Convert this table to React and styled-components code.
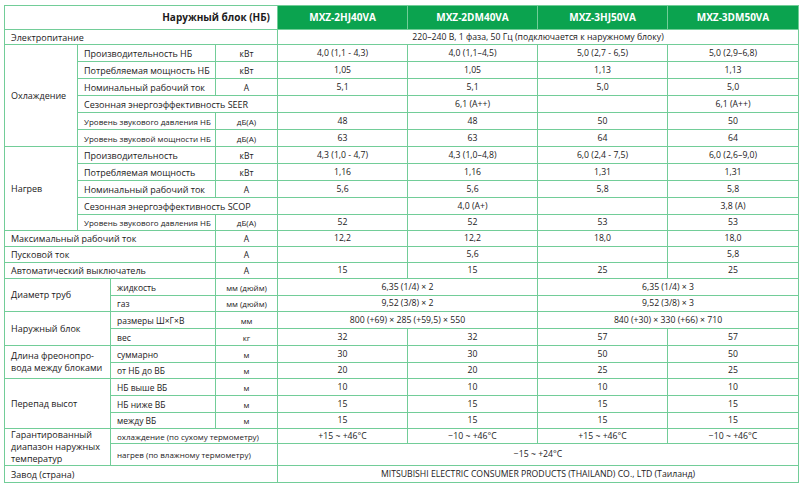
import React from "react";
import styled, { createGlobalStyle, css } from "styled-components";

const models = ["MXZ-2HJ40VA", "MXZ-2DM40VA", "MXZ-3HJ50VA", "MXZ-3DM50VA"];

const cooling = [
  ["Производительность НБ", "кВт", ["4,0 (1,1 - 4,3)", "4,0 (1,1–4,5)", "5,0 (2,7 - 6,5)", "5,0 (2,9–6,8)"]],
  ["Потребляемая мощность НБ", "кВт", ["1,05", "1,05", "1,13", "1,13"]],
  ["Номинальный рабочий ток", "А", ["5,1", "5,1", "5,0", "5,0"]],
  ["Сезонная энергоэффективность SEER", null, ["", "6,1 (A++)", "", "6,1 (A++)"]],
  ["Уровень звукового давления НБ", "дБ(А)", ["48", "48", "50", "50"], true],
  ["Уровень звуковой мощности НБ", "дБ(А)", ["63", "63", "64", "64"], true]
];

const heating = [
  ["Производительность", "кВт", ["4,3 (1,0 - 4,7)", "4,3 (1,0–4,8)", "6,0 (2,4 - 7,5)", "6,0 (2,6–9,0)"]],
  ["Потребляемая мощность", "кВт", ["1,16", "1,16", "1,31", "1,31"]],
  ["Номинальный рабочий ток", "А", ["5,6", "5,6", "5,8", "5,8"]],
  ["Сезонная энергоэффективность SCOP", null, ["", "4,0 (A+)", "", "3,8 (A)"]],
  ["Уровень звукового давления НБ", "дБ(А)", ["52", "52", "53", "53"], true]
];

const general = [
  ["Максимальный рабочий ток", "А", ["12,2", "12,2", "18,0", "18,0"]],
  ["Пусковой ток", "А", ["", "5,6", "", "5,8"]],
  ["Автоматический выключатель", "А", ["15", "15", "25", "25"]]
];

function Values({ list }) {
  return list.map((v, i) => <ValueCell key={i}>{v}</ValueCell>);
}

function GroupRows({ title, rows, heights }) {
  return rows.map(([name, unit, vals, small], i) => (
    <Row key={name + i} $h={heights[i]}>
      {i === 0 && <GroupCell rowSpan={rows.length}>{title}</GroupCell>}
      {unit === null ? (
        <ParamCell colSpan={3} $small={small}>{name}</ParamCell>
      ) : (
        <>
          <ParamCell colSpan={2} $small={small}>{name}</ParamCell>
          <UnitCell $small={small}>{unit}</UnitCell>
        </>
      )}
      <Values list={vals} />
    </Row>
  ));
}

export default function App() {
  return (
    <>
      <GlobalStyle />
      <Page>
        <Table>
          <colgroup>
            <col style={{ width: 73 }} />
            <col style={{ width: 33 }} />
            <col style={{ width: 105 }} />
            <col style={{ width: 62 }} />
            <col style={{ width: 130 }} />
            <col style={{ width: 130 }} />
            <col style={{ width: 130 }} />
            <col style={{ width: 131 }} />
          </colgroup>
          <tbody>
            <Row $h={24}>
              <HeadCell colSpan={4}>Наружный блок (НБ)</HeadCell>
              {models.map(m => (
                <ModelCell key={m}>{m}</ModelCell>
              ))}
            </Row>
            <Row $h={15}>
              <LabelCell colSpan={4}>Электропитание</LabelCell>
              <ValueCell colSpan={4}>220–240 В, 1 фаза, 50 Гц (подключается к наружному блоку)</ValueCell>
            </Row>
            <GroupRows title="Охлаждение" rows={cooling} heights={[17, 17, 17, 17, 17, 17]} />
            <GroupRows title="Нагрев" rows={heating} heights={[17, 17, 17, 17, 16]} />
            {general.map(([name, unit, vals]) => (
              <Row key={name} $h={16}>
                <LabelCell colSpan={3}>{name}</LabelCell>
                <UnitCell>{unit}</UnitCell>
                <Values list={vals} />
              </Row>
            ))}
            <Row $h={17}>
              <GroupCell colSpan={2} rowSpan={2}>Диаметр труб</GroupCell>
              <SubParamCell>жидкость</SubParamCell>
              <UnitCell $small>мм (дюйм)</UnitCell>
              <ValueCell colSpan={2}>6,35 (1/4) × 2</ValueCell>
              <ValueCell colSpan={2}>6,35 (1/4) × 3</ValueCell>
            </Row>
            <Row $h={16}>
              <SubParamCell>газ</SubParamCell>
              <UnitCell $small>мм (дюйм)</UnitCell>
              <ValueCell colSpan={2}>9,52 (3/8) × 2</ValueCell>
              <ValueCell colSpan={2}>9,52 (3/8) × 3</ValueCell>
            </Row>
            <Row $h={17}>
              <GroupCell colSpan={2} rowSpan={2}>Наружный блок</GroupCell>
              <SubParamCell>размеры Ш×Г×В</SubParamCell>
              <UnitCell $small>мм</UnitCell>
              <ValueCell colSpan={2}>800 (+69) × 285 (+59,5) × 550</ValueCell>
              <ValueCell colSpan={2}>840 (+30) × 330 (+66) × 710</ValueCell>
            </Row>
            <Row $h={17}>
              <SubParamCell>вес</SubParamCell>
              <UnitCell $small>кг</UnitCell>
              <Values list={["32", "32", "57", "57"]} />
            </Row>
            <Row $h={17}>
              <GroupCell colSpan={2} rowSpan={2}>
                Длина фреонопро-
                <br />
                вода между блоками
              </GroupCell>
              <SubParamCell>суммарно</SubParamCell>
              <UnitCell $small>м</UnitCell>
              <Values list={["30", "30", "50", "50"]} />
            </Row>
            <Row $h={16}>
              <SubParamCell>от НБ до ВБ</SubParamCell>
              <UnitCell $small>м</UnitCell>
              <Values list={["20", "20", "25", "25"]} />
            </Row>
            <Row $h={17}>
              <GroupCell colSpan={2} rowSpan={3}>Перепад высот</GroupCell>
              <SubParamCell>НБ выше ВБ</SubParamCell>
              <UnitCell $small>м</UnitCell>
              <Values list={["10", "10", "10", "10"]} />
            </Row>
            <Row $h={17}>
              <SubParamCell>НБ ниже ВБ</SubParamCell>
              <UnitCell $small>м</UnitCell>
              <Values list={["15", "15", "15", "15"]} />
            </Row>
            <Row $h={16}>
              <SubParamCell>между ВБ</SubParamCell>
              <UnitCell $small>м</UnitCell>
              <Values list={["15", "15", "15", "15"]} />
            </Row>
            <Row $h={15}>
              <GroupCell colSpan={2} rowSpan={2}>
                Гарантированный
                <br />
                диапазон наружных
                <br />
                температур
              </GroupCell>
              <SubParamCell colSpan={2} $small>охлаждение (по сухому термометру)</SubParamCell>
              <Values list={["+15 ~ +46°C", "−10 ~ +46°C", "+15 ~ +46°C", "−10 ~ +46°C"]} />
            </Row>
            <Row $h={21}>
              <SubParamCell colSpan={2} $small>нагрев (по влажному термометру)</SubParamCell>
              <ValueCell colSpan={4}>−15 ~ +24°C</ValueCell>
            </Row>
            <Row $h={17}>
              <LabelCell colSpan={4}>Завод (страна)</LabelCell>
              <ValueCell colSpan={4}>MITSUBISHI ELECTRIC CONSUMER PRODUCTS (THAILAND) CO., LTD (Таиланд)</ValueCell>
            </Row>
          </tbody>
        </Table>
      </Page>
    </>
  );
}

const GlobalStyle = createGlobalStyle`
  body {
    margin: 0;
    background: #ffffff;
    color: #1c1a1b;
    font-family: "Open Sans", "Noto Sans", sans-serif;
  }
`;

const Page = styled.div`
  padding: 5px 9px 8px 4px;
`;

const Table = styled.table`
  width: 794px;
  table-layout: fixed;
  border-collapse: collapse;
  font-size: 9px;
  line-height: 11px;
`;

const Row = styled.tr`
  height: ${props => props.$h}px;
`;

const cell = css`
  border: 1px solid #72cd98;
  padding: 0 6px;
  white-space: nowrap;
  overflow: hidden;
  vertical-align: middle;
`;

const HeadCell = styled.td`
  ${cell};
  text-align: right;
  font-weight: 700;
  font-size: 10px;
  padding-right: 7px;
`;

const ModelCell = styled.td`
  ${cell};
  background: #0ba34f;
  color: #ffffff;
  text-align: center;
  font-weight: 700;
  font-size: 10px;
`;

const LabelCell = styled.td`
  ${cell};
  text-align: left;
`;

const GroupCell = styled.td`
  ${cell};
  text-align: left;
  line-height: 12px;
`;

const ParamCell = styled.td`
  ${cell};
  text-align: left;
  font-size: ${props => (props.$small ? "8px" : "9px")};
`;

const SubParamCell = styled.td`
  ${cell};
  text-align: left;
  font-size: ${props => (props.$small ? "8px" : "8.5px")};
`;

const UnitCell = styled.td`
  ${cell};
  text-align: center;
  font-size: ${props => (props.$small ? "8px" : "8.5px")};
`;

const ValueCell = styled.td`
  ${cell};
  text-align: center;
  font-size: 8.7px;
`;
